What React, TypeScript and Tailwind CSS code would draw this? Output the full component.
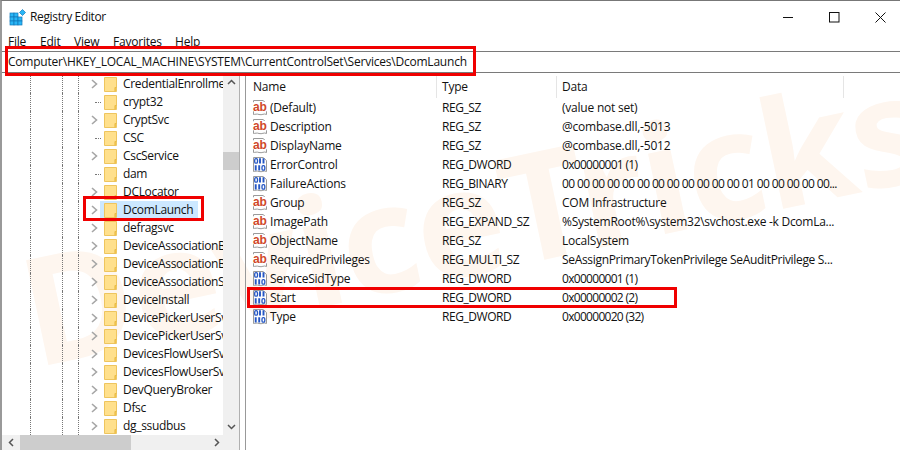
import React from "react";

const Folder = () => (
  <svg width="13" height="15" viewBox="0 0 13 15" className="shrink-0">
    <path d="M0.5 0.5H12.5V10.5H11V14.5H0.5Z" fill="#ffe08c" stroke="#eec55e" />
    <path d="M11 14.5V10.5H12.5V14.5Z" fill="#f4c64e" stroke="#e6b83f" strokeWidth="0.6" />
  </svg>
);

const Chevron = () => (
  <svg width="7" height="10" viewBox="0 0 7 10" className="shrink-0">
    <path d="M1 1L5.5 5L1 9" fill="none" stroke="#a6a6a6" strokeWidth="1.6" />
  </svg>
);

const Sheet = ({ children }: { children: React.ReactNode }) => (
  <svg width="16" height="17" viewBox="0 0 16 17" className="shrink-0">
    <path d="M1.5 1.5H11L14.5 4.5V15.5C12 14 10 16.5 7 15.5C5 14.6 3 15.5 1.5 15.5Z" fill="#fdfdfd" stroke="#9a9a9a" />
    {children}
  </svg>
);

const AbIcon = () => (
  <Sheet>
    <rect x="1" y="3" width="14" height="9.5" rx="1" fill="#ffffff" />
    <text x="7.8" y="11.5" textAnchor="middle" fontSize="12" fontWeight="700" fontFamily="'Liberation Sans', sans-serif" fill="#d0482a">ab</text>
  </Sheet>
);

const BinIcon = () => (
  <Sheet>
    <g fill="none" stroke="#2456c4" strokeWidth="1.3">
      <rect x="2.7" y="2.7" width="2.8" height="4.4" rx="1.2" />
      <path d="M8 2.2V7.6M11.5 2.2V7.6" strokeWidth="1.9" />
      <path d="M3.7 9.2V14.6M7.2 9.2V14.6" strokeWidth="1.9" />
      <rect x="10" y="9.7" width="2.8" height="4.4" rx="1.2" />
    </g>
  </Sheet>
);

const Dots = ({ w }: { w: string }) => (
  <span className={`h-full shrink-0 border-l border-dotted border-[#777] ${w}`} />
);

const treeRows: [string, boolean][] = [
  ["CredentialEnrollmentManager", true],
  ["crypt32", false],
  ["CryptSvc", true],
  ["CSC", false],
  ["CscService", true],
  ["dam", false],
  ["DCLocator", true],
  ["DcomLaunch", true],
  ["defragsvc", true],
  ["DeviceAssociationBrokerSvc", true],
  ["DeviceAssociationBrokerSvc_1", true],
  ["DeviceAssociationService", true],
  ["DeviceInstall", true],
  ["DevicePickerUserSvc", true],
  ["DevicePickerUserSvc_1", true],
  ["DevicesFlowUserSvc", true],
  ["DevicesFlowUserSvc_1", true],
  ["DevQueryBroker", true],
  ["Dfsc", true],
  ["dg_ssudbus", true],
];

const hex = "tracking-[-0.7px]";
const values: [string, "ab" | "bin", string, string, string][] = [
  ["(Default)", "ab", "REG_SZ", "(value not set)", ""],
  ["Description", "ab", "REG_SZ", "@combase.dll,-5013", ""],
  ["DisplayName", "ab", "REG_SZ", "@combase.dll,-5012", ""],
  ["ErrorControl", "bin", "REG_DWORD", "0x00000001 (1)", hex],
  ["FailureActions", "bin", "REG_BINARY", "00 00 00 00 00 00 00 00 00 00 00 00 01 00 00 00 00 00...", "tracking-[-0.62px]"],
  ["Group", "ab", "REG_SZ", "COM Infrastructure", ""],
  ["ImagePath", "ab", "REG_EXPAND_SZ", "%SystemRoot%\\system32\\svchost.exe -k DcomLa...", "tracking-[-0.28px]"],
  ["ObjectName", "ab", "REG_SZ", "LocalSystem", ""],
  ["RequiredPrivileges", "ab", "REG_MULTI_SZ", "SeAssignPrimaryTokenPrivilege SeAuditPrivilege S...", "tracking-[-0.32px]"],
  ["ServiceSidType", "bin", "REG_DWORD", "0x00000001 (1)", hex],
  ["Start", "bin", "REG_DWORD", "0x00000002 (2)", hex],
  ["Type", "bin", "REG_DWORD", "0x00000020 (32)", hex],
];

export default function App() {
  return (
    <div className="relative flex h-[450px] w-[900px] flex-col overflow-hidden border-t border-l-2 border-t-[#777] border-l-[#999] bg-white font-['Open_Sans',sans-serif] text-[12px] leading-none tracking-[-0.22px] text-[#111]">
      <div className="pointer-events-none absolute left-[22px] top-[235px] origin-left -rotate-[12deg] whitespace-nowrap font-['Noto_Sans',sans-serif] text-[150px] font-bold leading-none tracking-[-1px] text-[#fef6ef]">
        DeviceTricks
      </div>

      {/* Title bar */}
      <div className="relative flex h-[31px] shrink-0 items-center pl-[7px] pt-[1px]">
        <svg width="17" height="17" viewBox="0 0 17 17" className="mr-[4px] shrink-0">
          <g fill="#29b6f6" stroke="#1277b8" strokeWidth="0.7">
            <rect x="1" y="4" width="4" height="4" />
            <rect x="5" y="4" width="4" height="4" />
            <rect x="1" y="8" width="4" height="4" />
            <rect x="5" y="8" width="4" height="4" />
            <rect x="9" y="8" width="4" height="4" />
            <rect x="1" y="12" width="4" height="4" />
            <rect x="5" y="12" width="4" height="4" />
            <rect x="9" y="12" width="4" height="4" />
            <path d="M13.5 0.5L16.5 3.5L13.5 6.5L10.5 3.5Z" />
          </g>
        </svg>
        <span className="text-[12px] tracking-[-0.35px]">Registry Editor</span>
        <div className="ml-auto flex items-center pr-[14px]">
          <svg width="11" height="11" viewBox="0 0 11 11" className="mr-[35px]"><path d="M0 5.5H10" stroke="#111" /></svg>
          <svg width="11" height="11" viewBox="0 0 11 11" className="mr-[35px]"><rect x="0.5" y="0.5" width="9.5" height="9.5" fill="none" stroke="#111" /></svg>
          <svg width="11" height="11" viewBox="0 0 11 11"><path d="M0.5 0.5L10.5 10.5M10.5 0.5L0.5 10.5" stroke="#111" /></svg>
        </div>
      </div>

      {/* Menu */}
      <div className="relative flex h-[19px] shrink-0 items-center pl-[6px] pt-[1px]">
        <span className="w-[32px]">File</span>
        <span className="w-[34px]">Edit</span>
        <span className="w-[39px]">View</span>
        <span className="w-[62px]">Favorites</span>
        <span>Help</span>
      </div>

      {/* Address */}
      <div className="relative flex h-[22px] shrink-0 items-center border-y border-y-[#7a7a7a] pl-[6px]">
        Computer\HKEY_LOCAL_MACHINE\SYSTEM\CurrentControlSet\Services\DcomLaunch
      </div>

      {/* Panes */}
      <div className="relative flex min-h-0 flex-1">
        <div className="flex w-[238px] shrink-0 flex-col border-r border-r-[#b0b0b0]">
          <div className="flex min-h-0 flex-1">
            <div className="w-[222px] overflow-hidden pt-[2px] tracking-[-0.32px]">
              {treeRows.map(([name, hasChildren]) => (
                <div key={name} className="flex h-[18px] items-center whitespace-nowrap">
                  <span className="w-[28px] shrink-0" />
                  <Dots w="w-[32px]" />
                  <Dots w="w-[16px]" />
                  <Dots w="w-[13px]" />
                  {hasChildren ? (
                    <span className="flex w-[13px] shrink-0 justify-start"><Chevron /></span>
                  ) : (
                    <span className="flex h-full w-[13px] shrink-0 items-center pl-[4px]">
                      <span className="w-[6px] border-t border-dotted border-[#777]" />
                    </span>
                  )}
                  {name === "DcomLaunch" ? (
                    <span className="-ml-[4px] flex h-[19px] w-[98px] shrink-0 items-center bg-[#cce8ff] pl-[4px]">
                      <Folder />
                      <span className="ml-[6px]">{name}</span>
                    </span>
                  ) : (
                    <>
                      <Folder />
                      <span className="ml-[6px]">{name}</span>
                    </>
                  )}
                </div>
              ))}
            </div>
            {/* Vertical scrollbar */}
            <div className="relative flex w-[16px] shrink-0 flex-col bg-[#f0f0f0]">
              <div className="flex h-[17px] items-center justify-center">
                <svg width="9" height="6" viewBox="0 0 9 6"><path d="M1 5L4.5 1.5L8 5" fill="none" stroke="#555" strokeWidth="1.5" /></svg>
              </div>
              <div className="mt-[62px] h-[18px] bg-[#cdcdcd]" />
              <div className="mt-auto flex h-[17px] items-center justify-center">
                <svg width="9" height="6" viewBox="0 0 9 6"><path d="M1 1L4.5 4.5L8 1" fill="none" stroke="#555" strokeWidth="1.5" /></svg>
              </div>
            </div>
          </div>
          {/* Horizontal scrollbar */}
          <div className="flex h-[15px] shrink-0 items-center bg-[#f0f0f0]">
            <span className="flex w-[18px] shrink-0 justify-center">
              <svg width="6" height="9" viewBox="0 0 6 9"><path d="M5 1L1.5 4.5L5 8" fill="none" stroke="#555" strokeWidth="1.5" /></svg>
            </span>
            <span className="h-full w-[111px] bg-[#cdcdcd]" />
            <span className="ml-auto flex w-[44px] justify-center">
              <svg width="6" height="9" viewBox="0 0 6 9"><path d="M1 1L4.5 4.5L1 8" fill="none" stroke="#555" strokeWidth="1.5" /></svg>
            </span>
          </div>
        </div>

        <div className="w-[5px] shrink-0" />

        <div className="min-w-0 flex-1 border-l border-l-[#999]">
          <div className="flex h-[23px] items-center pt-[4px]">
            <span className="w-[191px] border-r border-r-[#e5e5e5] pl-[7px] leading-[22px]">Name</span>
            <span className="w-[120px] border-r border-r-[#e5e5e5] pl-[5px] leading-[22px]">Type</span>
            <span className="w-[287px] border-r border-r-[#e5e5e5] pl-[5px] leading-[22px]">Data</span>
          </div>
          <div className="pt-[2px]">
            {values.map(([name, kind, type, data, track]) => (
              <div key={name} className="flex h-[19px] items-center whitespace-nowrap">
                <span className="flex w-[191px] shrink-0 items-center pl-[6px]">
                  {kind === "ab" ? <AbIcon /> : <BinIcon />}
                  <span className="ml-[2px]">{name}</span>
                </span>
                <span className="w-[120px] shrink-0 pl-[5px] tracking-[-0.45px]">{type}</span>
                <span className={`pl-[5px] ${track}`}>{data}</span>
              </div>
            ))}
          </div>
        </div>
      </div>

      {/* Red call-outs */}
      <div className="absolute left-[3px] top-[45px] h-[30px] w-[471px] border-[3px] border-[#f00000]" />
      <div className="absolute left-[81px] top-[195px] h-[25px] w-[121px] border-[3px] border-[#f00000]" />
      <div className="absolute left-[245px] top-[286px] h-[21px] w-[430px] border-[3px] border-[#f00000]" />
    </div>
  );
}
